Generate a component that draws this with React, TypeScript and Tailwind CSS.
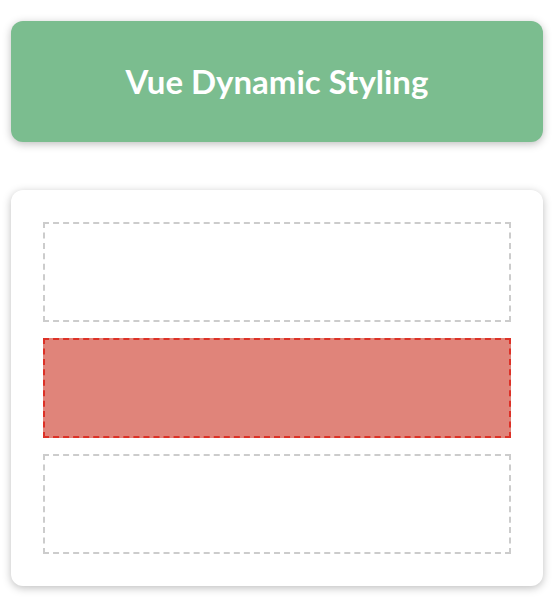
import React from "react";

export default function App() {
  const boxes = [false, true, false];
  return (
    <div className="min-h-[597px] bg-white pt-[21px]" style={{ fontFamily: "Lato, 'Noto Sans', sans-serif" }}>
      <header className="ml-[11px] flex h-[121px] w-[532px] items-center justify-center rounded-[12px] bg-[#7bbd8f] shadow-[0_2px_8px_rgba(0,0,0,0.26)]">
        <h1 className="text-[33px] font-bold leading-none text-white">Vue Dynamic Styling</h1>
      </header>
      <section className="ml-[11px] mt-[48px] flex w-[532px] flex-col gap-[16px] rounded-[12px] bg-white p-[32px] shadow-[0_2px_8px_rgba(0,0,0,0.26)]">
        {boxes.map((active, i) => (
          <div
            key={i}
            className={
              active
                ? "h-[100px] w-full border-2 border-dashed border-[#dd3127] bg-[#e0847a]"
                : "h-[100px] w-full border-2 border-dashed border-[#cccccc] bg-white"
            }
          />
        ))}
      </section>
    </div>
  );
}
